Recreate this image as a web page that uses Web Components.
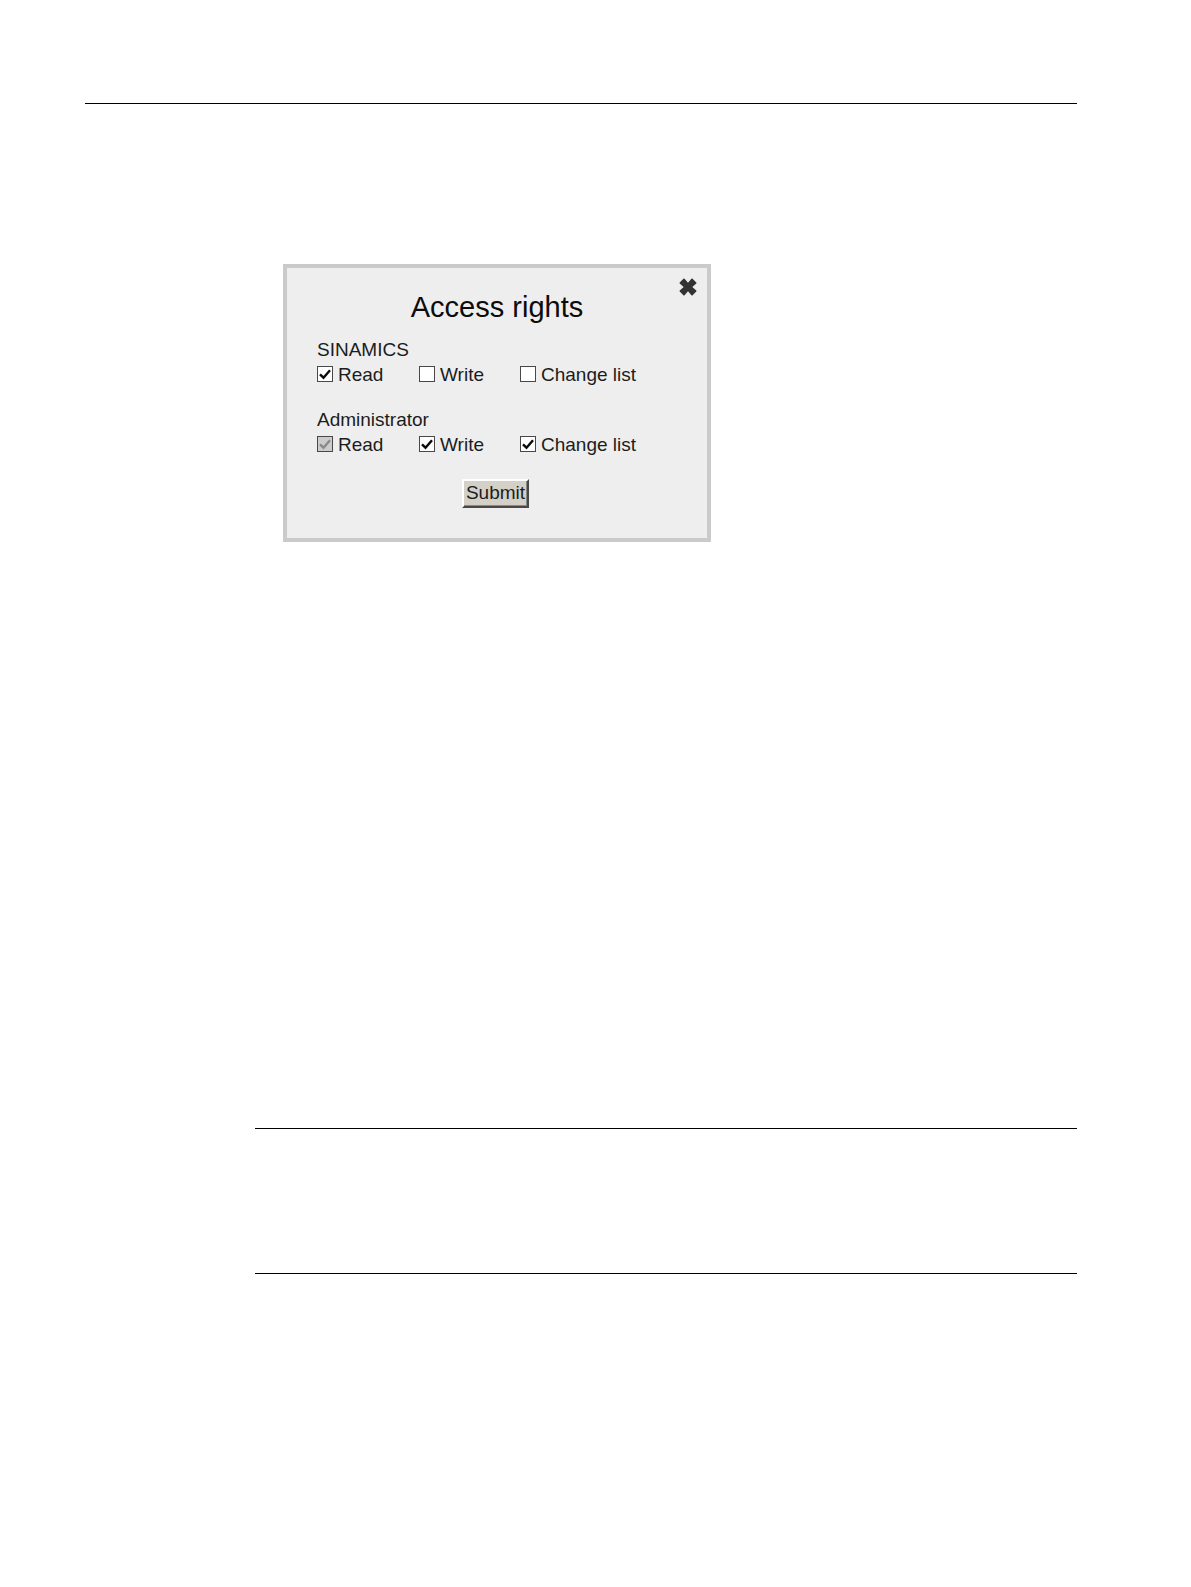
<!DOCTYPE html>
<html lang="en">
<head>
<meta charset="utf-8">
<title>Access rights</title>
<style>
  body { margin: 0; background: #fff; color: #1c1c1c; font-family: "Liberation Sans", Arial, sans-serif; font-size: 19px; line-height: 25px; }
</style>
</head>
<body>
<manual-page>
  <access-dialog heading="Access rights">
    <rights-group name="SINAMICS">
      <right-option label="Read" checked></right-option>
      <right-option label="Write"></right-option>
      <right-option label="Change list"></right-option>
    </rights-group>
    <rights-group name="Administrator">
      <right-option label="Read" checked disabled></right-option>
      <right-option label="Write" checked></right-option>
      <right-option label="Change list" checked></right-option>
    </rights-group>
  </access-dialog>
  <note-frame slot="note"></note-frame>
</manual-page>
<script>
const build = (host, html) => { host.attachShadow({ mode: 'open' }).innerHTML = html; };

customElements.define('manual-page', class extends HTMLElement {
  constructor() {
    super();
    build(this, `
      <style>
        :host { display: block; box-sizing: border-box; min-height: 100vh; padding: 103px 114px 0 85px; }
        header { border-top: 1px solid #000; }
        .figure { padding: 160px 0 0 198px; }
        .note { padding: 586px 0 0 170px; }
      </style>
      <header></header>
      <main>
        <div class="figure"><slot></slot></div>
        <div class="note"><slot name="note"></slot></div>
      </main>`);
  }
});

customElements.define('note-frame', class extends HTMLElement {
  constructor() {
    super();
    build(this, `<style>
      :host { display: block; border: solid #000; border-width: 1px 0; padding: 72px 0; }
    </style><slot></slot>`);
  }
});

customElements.define('access-dialog', class extends HTMLElement {
  constructor() {
    super();
    build(this, `
      <style>
        :host { display: block; position: relative; box-sizing: border-box; max-width: 428px;
                border: 4px solid #cacaca; background: #eee; padding: 22px 0 30px; }
        h1 { margin: 0 0 13px; font-size: 29px; line-height: 34px; font-weight: 400; text-align: center; color: #0c0c0c; }
        form { display: flex; flex-direction: column; gap: 20px; padding: 0 33px 0 30px; }
        .submit { align-self: center; box-sizing: border-box; height: 29px; margin-top: 2px; padding: 0 2px 2px; border: 2px solid;
                  border-color: #fff #484848 #484848 #fff; background: #d4d0c8;
                  box-shadow: inset -1px -1px #8a8883; font: inherit; line-height: 23px; color: inherit; }
        .close { position: absolute; top: 10px; right: 10px; display: flex; padding: 0; border: 0; background: none; }
      </style>
      <button class="close" type="button" aria-label="Close">
        <svg width="18" height="18" viewBox="0 0 18 18"><path fill="#333" d="M4.400.7Q5 .2 5.600.7L9 4.700 12.400.7Q13 .2 13.600.7L17.300 4.400Q17.800 5 17.300 5.600L13.300 9l4 3.400Q17.800 13 17.300 13.600L13.600 17.300Q13 17.800 12.400 17.300L9 13.300 5.600 17.300Q5 17.800 4.400 17.300L.7 13.600Q.2 13 .7 12.400L4.700 9 .7 5.600Q.2 5 .7 4.400Z"/></svg>
      </button>
      <h1></h1>
      <form>
        <slot></slot>
        <button class="submit" type="button">Submit</button>
      </form>`);
    this.shadowRoot.querySelector('h1').textContent = this.getAttribute('heading');
  }
});

customElements.define('rights-group', class extends HTMLElement {
  constructor() {
    super();
    build(this, `
      <style>
        :host { display: block; }
        .options { display: grid; grid-template-columns: 102px 101px 1fr; }
      </style>
      <div role="group" aria-labelledby="name">
        <div id="name"></div>
        <div class="options"><slot></slot></div>
      </div>`);
    this.shadowRoot.getElementById('name').textContent = this.getAttribute('name');
  }
});

customElements.define('right-option', class extends HTMLElement {
  constructor() {
    super();
    build(this, `
      <style>
        :host { display: block; }
        label { display: flex; align-items: flex-start; gap: 5px; white-space: nowrap; }
        .box { display: grid; margin-top: 4px; }
        input, svg { grid-area: 1 / 1; }
        input { appearance: none; box-sizing: border-box; width: 16px; height: 16px; margin: 0;
                border: 1px solid #484848; background: #fff; }
        input:disabled { background: #ccc; }
        svg { display: none; pointer-events: none; fill: none; stroke: #0a0a0a; stroke-width: 2.400; }
        input:checked + svg { display: block; }
        input:disabled + svg { stroke: #8a8a8a; }
      </style>
      <label for="right">
        <span class="box">
          <input id="right" type="checkbox">
          <svg width="16" height="16" viewBox="0 0 16 16"><path d="M3 8.300 6.500 11.700 13 4.200"/></svg>
        </span>
        <span class="text"></span>
      </label>`);
    const input = this.shadowRoot.querySelector('input');
    input.checked = this.hasAttribute('checked');
    input.disabled = this.hasAttribute('disabled');
    this.shadowRoot.querySelector('.text').textContent = this.getAttribute('label');
  }
});
</script>
</body>
</html>
